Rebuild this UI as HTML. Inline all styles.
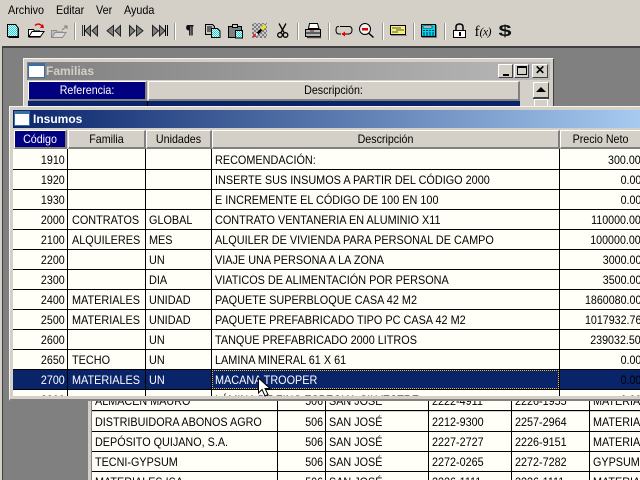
<!DOCTYPE html>
<html><head><meta charset="utf-8"><style>
html,body{margin:0;padding:0;width:640px;height:480px;overflow:hidden;background:#D4D0C8}
*{box-sizing:border-box}
body{font:12px/16px "Liberation Sans",sans-serif;color:#000;position:relative}
div,span{position:absolute}
span{white-space:nowrap}
.m{top:2px;color:#000;transform:scaleX(.9);transform-origin:left}
.hd{background:#D4D0C8;border-top:1px solid #fff;border-left:1px solid #fff;border-right:2px solid #808080;border-bottom:2px solid #808080;text-align:center;line-height:16px;white-space:nowrap;overflow:hidden}
.hd i{display:block;font-style:normal;transform:scaleX(.89)}
.r{left:13px;width:627px;height:20px;border-bottom:1px solid #000;background:#FFFFF8}
.r span{top:2px;transform:scaleX(.905);transform-origin:left}
.r .a,.r .e{transform:scaleX(.89);transform-origin:right}
.a{right:575px;text-align:right}
.b{left:59px}.c{left:136px}.d{left:202px}.e{right:-1px;text-align:right}
.v{width:1px;background:#000}
.g{left:92px;width:548px;height:20px;border-bottom:1px solid #000;background:#FFFFF8}
.g span{top:2px;transform:scaleX(.9);transform-origin:left}
.g .g2{transform:scaleX(.89);transform-origin:right}
.g1{left:3px}.g2{right:317px}.g3{left:237px}.g4{left:340px}.g5{left:423px}.g6{left:501px}
.sel,.sel span{color:#fff}
</style></head><body>
<span class="m" style="left:8px">Archivo</span>
<span class="m" style="left:56px">Editar</span>
<span class="m" style="left:96px">Ver</span>
<span class="m" style="left:124px">Ayuda</span>

<svg style="position:absolute;left:0;top:18px" width="640" height="28" viewBox="0 18 640 28">
<defs><pattern id="dc" width="2" height="2" patternUnits="userSpaceOnUse"><rect width="2" height="2" fill="#fff"/><rect width="1" height="1" fill="#00e0e0"/><rect x="1" y="1" width="1" height="1" fill="#00e0e0"/></pattern>
<pattern id="hat" width="4" height="4" patternUnits="userSpaceOnUse"><rect width="4" height="4" fill="#c8c8c8"/><rect width="2" height="2" fill="#808080"/><rect x="2" y="2" width="2" height="2" fill="#808080"/></pattern></defs>
<g shape-rendering="crispEdges" fill="#f8f8f8" stroke="#b8b4ac">
<path d="M75.5 23v17M175.5 23v17M298.5 23v17M329.5 23v17M383.5 23v17M414.5 23v17M445.5 23v17" stroke="#fff" stroke-width="1"/>
<path d="M74.5 23v17M174.5 23v17M297.5 23v17M328.5 23v17M382.5 23v17M413.5 23v17M444.5 23v17" stroke="#9a978f" stroke-width="1"/>
</g>
<!-- new -->
<path d="M7.500 24.500h8l2.500 3v9h-10.500z" fill="url(#dc)" stroke="#000" shape-rendering="crispEdges"/><path d="M18.500 28v9.500h-10" fill="none" stroke="#000" shape-rendering="crispEdges"/>
<!-- open -->
<path d="M28.500 29.500h5l1 1.500h5v5.500h-11z" fill="#fff" stroke="#000"/><path d="M29 36.500l3-5h12l-3.500 5z" fill="#fff" stroke="#000"/><path d="M28.500 37.500h12" stroke="#555"/>
<path d="M35 25.500c2-2 5-2 7 .5" fill="none" stroke="#e00000" stroke-width="1.300"/><path d="M40 28l4 0-1-4z" fill="#e00000"/>
<!-- open gray -->
<path d="M51.500 30.500h5l1 1.500h5v5.500h-11z" fill="#c0c0c0" stroke="#8c8c8c"/><path d="M52 37.500l3-5h11l-3.500 5z" fill="#d8d8d8" stroke="#8c8c8c"/><path d="M62 30l5-4M64 26h3v3" fill="none" stroke="#808080"/>
<!-- nav -->
<path d="M82.500 25v11" stroke="#333" fill="none" shape-rendering="crispEdges"/><path d="M84.500 25v11" stroke="#000" fill="none" shape-rendering="crispEdges"/>
<g fill="#808080" stroke="#222">
<path d="M90.500 25.500v10.500l-5.500-5.200z"/><path d="M97.500 25.500v10.500l-5.500-5.200z"/>
<path d="M113.500 25.500v10.500l-6.500-5.200z"/><path d="M120.500 25.500v10.500l-5.500-5.200z"/>
<path d="M129.500 25.500v10.500l5.500-5.200z"/><path d="M136.500 25.500v10.500l6.500-5.200z"/>
<path d="M152.500 25.500v10.500l6-5.200z"/><path d="M159.500 25.500v10.500l5.500-5.200z"/>
</g>
<path d="M165.500 25v11M167.500 25v11" stroke="#000" fill="none" shape-rendering="crispEdges"/>
<!-- pilcrow -->
<path d="M187.500 25h6v1.500h-.8v9h-1.400v-9h-.8v9h-1.400v-5c-2-.2-3-1.200-3-2.800s.8-2.700 1.400-2.700z" fill="#111"/>
<!-- copy -->
<path d="M205.500 24.500h7l2 2v8h-9z" fill="#c8c8c8" stroke="#000" shape-rendering="crispEdges"/><path d="M207 27h5M207 29h5M207 31h5" stroke="#000" shape-rendering="crispEdges"/>
<path d="M211.500 28.500h6l2.500 2.500v6.500h-8.500z" fill="url(#dc)" stroke="#000" shape-rendering="crispEdges"/>
<!-- paste -->
<path d="M228.500 26.500h13v11h-13z" fill="#808080" stroke="#000" shape-rendering="crispEdges"/><path d="M232.500 24.500h5v3h-5z" fill="#d4d0c8" stroke="#000" shape-rendering="crispEdges"/>
<path d="M235.500 30.500h7v7.500h-7z" fill="url(#dc)" stroke="#000" shape-rendering="crispEdges"/>
<!-- wand -->
<rect x="252" y="23" width="15" height="15" fill="url(#hat)"/><path d="M255 36l9-9" stroke="#000" stroke-width="2.500"/><path d="M261.500 29.500l4-4" stroke="#f0e020" stroke-width="3"/><path d="M254.500 36.500l3-3" stroke="#fff" stroke-width="2"/><rect x="253" y="34" width="3" height="3" fill="#e03030"/>
<!-- scissors -->
<path d="M279 23.500l5 9M286 23.500l-5 9" stroke="#000" stroke-width="1.300" fill="none"/><circle cx="280" cy="35" r="2.300" fill="none" stroke="#000" stroke-width="1.300"/><circle cx="285.500" cy="35" r="2.300" fill="none" stroke="#000" stroke-width="1.300"/>
<!-- printer -->
<path d="M309.500 23.500h8l1.500 5h-10.500z" fill="#fff" stroke="#000"/><path d="M305.500 29.500h15v7h-15z" fill="#b8b8b8" stroke="#000"/><path d="M306 33h15" stroke="#000"/><path d="M307 37.500h14" stroke="#444" stroke-width="1.500"/><rect x="310" y="30.500" width="4" height="1" fill="#702020"/>
<!-- loop -->
<path d="M340 26.500h9q3 0 3 3.500t-3 4h-3M341 34h-2q-3 0-3-4t3-3.500" fill="none" stroke="#000"/><path d="M342 34h5" stroke="#e00000" stroke-width="1.500"/><path d="M345 31.500v5l-3.500-2.500z" fill="#e00000"/>
<!-- zoom -->
<circle cx="365" cy="29" r="5.500" fill="#f4f4f4" stroke="#000"/><path d="M368.500 33l5 4.500" stroke="#000" stroke-width="1.500"/><rect x="362" y="28" width="6" height="2.500" fill="#e00000"/>
<!-- note -->
<rect x="390.500" y="25.500" width="15" height="9" fill="#f8f070" stroke="#000" shape-rendering="crispEdges"/><path d="M392 28h9M396 30h8M392 32h6" stroke="#555" shape-rendering="crispEdges"/><path d="M391 35.500h16" stroke="#888" shape-rendering="crispEdges"/>
<!-- calc -->
<rect x="421.500" y="24.500" width="14" height="12" fill="#00d8e8" stroke="#000" shape-rendering="crispEdges"/><rect x="423" y="26" width="9" height="2" fill="#fff" stroke="#000" stroke-width=".6"/><path d="M423 30.500h11M423 33h11M423 35h11" stroke="#003060" stroke-dasharray="2 1" shape-rendering="crispEdges"/><path d="M422 37.500h15M436.500 25v12" stroke="#777" shape-rendering="crispEdges"/>
<!-- lock -->
<rect x="453.500" y="30.500" width="12" height="7" fill="#fff" stroke="#000" shape-rendering="crispEdges"/><path d="M456 30v-3q0-3 3.500-3t3.500 3v3" fill="none" stroke="#000" stroke-width="1.500"/><rect x="459" y="32" width="2" height="4" fill="#000"/>
<!-- fx -->
<text x="474.500" y="36" font-family="Liberation Serif,serif" font-size="15" fill="#000">f</text><text x="479.500" y="35.500" font-family="Liberation Serif,serif" font-style="italic" font-size="12" fill="#000" textLength="12">(x)</text>
<!-- dollar -->
<text x="498.500" y="36" font-family="Liberation Sans,sans-serif" font-weight="bold" font-size="16" fill="#111" textLength="13" lengthAdjust="spacingAndGlyphs">$</text>
</svg>

<!-- MDI -->
<div style="left:2px;top:46px;width:638px;height:434px;background:#808080;border-left:1px solid #404040;border-top:2px solid #404040"></div>
<div style="left:0;top:46px;width:2px;height:434px;background:#D4D0C8"></div>

<!-- Familias -->
<div style="left:23px;top:58px;width:531px;height:300px;background:#D4D0C8;border:1px solid #f4f4f0;border-right-color:#404040"></div>
<div style="left:27px;top:62px;width:523px;height:18px;background:linear-gradient(90deg,#808080,#b8b8b8)"></div>
<svg style="position:absolute;left:28px;top:63px" width="17" height="15" shape-rendering="crispEdges"><rect width="16" height="14" x=".5" y=".5" fill="#fff" stroke="#3a6ea5"/><rect x="1" y="1" width="15" height="2" fill="#3a6ea5"/></svg>
<span style="left:46px;top:63px;font-weight:bold;color:#d4d0c8;font-size:12px">Familias</span>
<div style="left:498px;top:64px;width:15px;height:14px;background:#D4D0C8;border:1px solid;border-color:#fff #404040 #404040 #fff"><div style="left:4px;top:9px;width:6px;height:2px;background:#000"></div></div>
<div style="left:514px;top:64px;width:15px;height:14px;background:#D4D0C8;border:1px solid;border-color:#fff #404040 #404040 #fff"><div style="left:2px;top:1px;width:10px;height:9px;border:1px solid #000;border-top-width:2px"></div></div>
<div style="left:532px;top:64px;width:16px;height:14px;background:#D4D0C8;border:1px solid;border-color:#fff #404040 #404040 #fff;font:bold 12px/11px 'Liberation Sans',sans-serif;text-align:center">✕</div>
<div style="left:28px;top:101px;width:492px;height:30px;background:#0A246A"></div>
<div style="left:147px;top:101px;width:1px;height:30px;background:#000"></div>
<div class="hd" style="left:28px;top:81px;width:119px;height:20px;background:#000080;color:#fff"><i>Referencia:</i></div>
<div class="hd" style="left:148px;top:81px;width:372px;height:20px"><i>Descripción:</i></div>
<div style="left:533px;top:82px;width:16px;height:16px;background:#D4D0C8;border:1px solid;border-color:#fff #404040 #404040 #fff"><div style="left:2px;top:4px;width:0;height:0;border-left:5px solid transparent;border-right:5px solid transparent;border-bottom:5px solid #000"></div></div>
<div style="left:533px;top:98px;width:16px;height:1px;background:#404040"></div>
<div style="left:534px;top:99px;width:14px;height:8px;background:#D4D0C8;border:1px solid #fff;border-bottom:0"></div>

<!-- Lower grid -->
<div style="left:88px;top:395px;width:552px;height:85px;background:#D4D0C8"></div>
<div style="left:91px;top:395px;width:1px;height:85px;background:#808080"></div>
<div class="g" style="top:391px;"><span class="g1">ALMACEN MAURO</span><span class="g2">506</span><span class="g3">SAN JOSÉ</span><span class="g4">2222-4911</span><span class="g5">2226-1955</span><span class="g6">MATERIALES</span></div>
<div class="g" style="top:412px;"><span class="g1">DISTRIBUIDORA ABONOS AGRO</span><span class="g2">506</span><span class="g3">SAN JOSÉ</span><span class="g4">2212-9300</span><span class="g5">2257-2964</span><span class="g6">MATERIALES</span></div>
<div class="g" style="top:432px;"><span class="g1">DEPÓSITO QUIJANO, S.A.</span><span class="g2">506</span><span class="g3">SAN JOSÉ</span><span class="g4">2227-2727</span><span class="g5">2226-9151</span><span class="g6">MATERIALES</span></div>
<div class="g" style="top:452px;"><span class="g1">TECNI-GYPSUM</span><span class="g2">506</span><span class="g3">SAN JOSÉ</span><span class="g4">2272-0265</span><span class="g5">2272-7282</span><span class="g6">GYPSUM</span></div>
<div class="g" style="top:472px;"><span class="g1">MATERIALES ISA</span><span class="g2">506</span><span class="g3">SAN JOSÉ</span><span class="g4">2226-1111</span><span class="g5">2226-1111</span><span class="g6">MATERIALES</span></div>
<div class="v" style="left:277px;top:391px;height:89px"></div>
<div class="v" style="left:325px;top:391px;height:89px"></div>
<div class="v" style="left:428px;top:391px;height:89px"></div>
<div class="v" style="left:511px;top:391px;height:89px"></div>
<div class="v" style="left:589px;top:391px;height:89px"></div>

<!-- Insumos -->
<div style="left:9px;top:106px;width:640px;height:295px;background:#D4D0C8;border:1px solid #f4f4f0;border-bottom:2px solid #808080;overflow:hidden"></div>
<div style="left:13px;top:110px;width:627px;height:18px;background:linear-gradient(90deg,#0A246A,#A6CAF0)"></div>
<svg style="position:absolute;left:14px;top:111px" width="17" height="15" shape-rendering="crispEdges"><rect width="15" height="14" x=".5" y=".5" fill="#fff" stroke="#3a6ea5"/><rect x="1" y="1" width="14" height="2" fill="#3a6ea5"/></svg>
<span style="left:33px;top:111px;font-weight:bold;color:#fff;font-size:12px">Insumos</span>
<div class="hd" style="left:14px;top:130px;width:53px;height:19px;background:#000080;color:#fff"><i>Código</i></div>
<div class="hd" style="left:68px;top:130px;width:78px;height:19px"><i>Familia</i></div>
<div class="hd" style="left:146px;top:130px;width:66px;height:19px"><i>Unidades</i></div>
<div class="hd" style="left:212px;top:130px;width:348px;height:19px"><i>Descripción</i></div>
<div class="hd" style="left:560px;top:130px;width:80px;height:19px;border-right:0"><i>Precio Neto</i></div>
<div style="left:13px;top:149px;width:627px;height:247px;background:#FFFFF8;overflow:hidden;" id="t">
<div class="r" style="left:0;top:1px"><span class="a">1910</span><span class="d">RECOMENDACIÓN:</span><span class="e">300.00</span></div>
<div class="r" style="left:0;top:21px"><span class="a">1920</span><span class="d">INSERTE SUS INSUMOS A PARTIR DEL CÓDIGO 2000</span><span class="e">0.00</span></div>
<div class="r" style="left:0;top:41px"><span class="a">1930</span><span class="d">E INCREMENTE EL CÓDIGO DE 100 EN 100</span><span class="e">0.00</span></div>
<div class="r" style="left:0;top:61px"><span class="a">2000</span><span class="b">CONTRATOS</span><span class="c">GLOBAL</span><span class="d">CONTRATO VENTANERIA EN ALUMINIO X11</span><span class="e">110000.00</span></div>
<div class="r" style="left:0;top:81px"><span class="a">2100</span><span class="b">ALQUILERES</span><span class="c">MES</span><span class="d">ALQUILER DE VIVIENDA PARA PERSONAL DE CAMPO</span><span class="e">100000.00</span></div>
<div class="r" style="left:0;top:101px"><span class="a">2200</span><span class="c">UN</span><span class="d">VIAJE UNA PERSONA A LA ZONA</span><span class="e">3000.00</span></div>
<div class="r" style="left:0;top:121px"><span class="a">2300</span><span class="c">DIA</span><span class="d">VIATICOS DE ALIMENTACIÓN POR PERSONA</span><span class="e">3500.00</span></div>
<div class="r" style="left:0;top:141px"><span class="a">2400</span><span class="b">MATERIALES</span><span class="c">UNIDAD</span><span class="d">PAQUETE SUPERBLOQUE CASA 42 M2</span><span class="e">1860080.00</span></div>
<div class="r" style="left:0;top:161px"><span class="a">2500</span><span class="b">MATERIALES</span><span class="c">UNIDAD</span><span class="d">PAQUETE PREFABRICADO TIPO PC CASA 42 M2</span><span class="e">1017932.76</span></div>
<div class="r" style="left:0;top:181px"><span class="a">2600</span><span class="c">UN</span><span class="d">TANQUE PREFABRICADO 2000 LITROS</span><span class="e">239032.50</span></div>
<div class="r" style="left:0;top:201px"><span class="a">2650</span><span class="b">TECHO</span><span class="c">UN</span><span class="d">LAMINA MINERAL 61 X 61</span><span class="e">0.00</span></div>
<div class="r sel" style="left:0;top:220px;height:21px;background:#0A246A;border-top:1px solid #000"><span class="a">2700</span><span class="b">MATERIALES</span><span class="c">UN</span><span class="d">MACANA TROOPER</span><span class="e" style="color:#000">0.00</span></div>
<div class="r" style="left:0;top:241px"><span class="a">2800</span><span class="d">LÁMINA DE ZINC ESPECIAL SILVESTRE</span><span class="e">0.00</span></div>
<div style="left:199px;top:221px;width:347px;height:19px;border:1px dotted #f0c040"></div>
<div class="v" style="left:54px;top:0;height:247px"></div>
<div class="v" style="left:132px;top:0;height:247px"></div>
<div class="v" style="left:198px;top:0;height:247px"></div>
<div class="v" style="left:546px;top:0;height:247px"></div>
</div>
<div style="left:10px;top:396px;width:630px;height:3px;background:#D4D0C8"></div>
<div style="left:10px;top:399px;width:630px;height:2px;background:#808080"></div>
<div style="left:10px;top:107px;width:3px;height:292px;background:#D4D0C8"></div>

<!-- cursor -->
<svg style="position:absolute;left:257px;top:377px" width="16" height="22"><path d="M1.500 1v15l3.500-3.500 3 6.500 3-1.500-3-6h5z" fill="#fff" stroke="#000"/></svg>
</body></html>
